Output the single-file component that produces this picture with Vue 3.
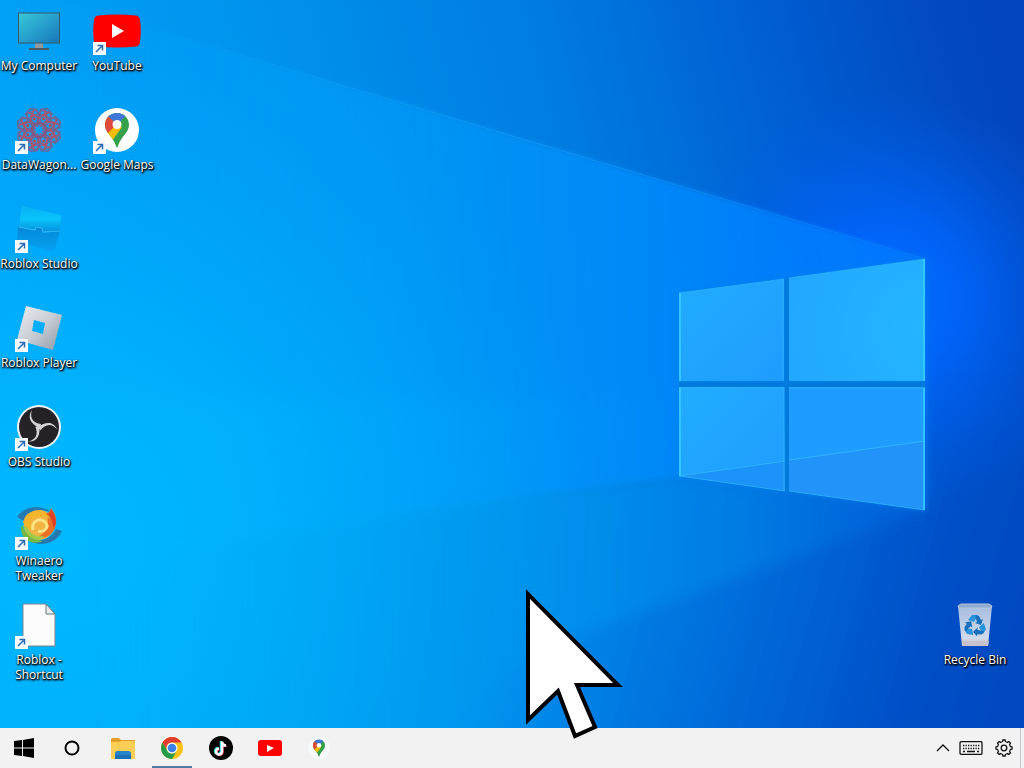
<script setup>
const shortcuts = [
  { id: 'computer', label: 'My Computer', col: 1, row: 1, linked: false },
  { id: 'datawagon', label: 'DataWagon...', col: 1, row: 2, linked: true },
  { id: 'studio', label: 'Roblox Studio', col: 1, row: 3, linked: true },
  { id: 'player', label: 'Roblox Player', col: 1, row: 4, linked: true },
  { id: 'obs', label: 'OBS Studio', col: 1, row: 5, linked: true },
  { id: 'winaero', label: 'Winaero Tweaker', col: 1, row: 6, linked: true },
  { id: 'page', label: 'Roblox - Shortcut', col: 1, row: 7, linked: true },
  { id: 'youtube', label: 'YouTube', col: 2, row: 1, linked: true },
  { id: 'maps', label: 'Google Maps', col: 2, row: 2, linked: true },
  { id: 'bin', label: 'Recycle Bin', col: 4, row: 7, linked: false }
]
const eighths = [0, 45, 90, 135, 180, 225, 270, 315]
const thirds = [0, 120, 240]
</script>

<template>
  <div class="screen">
    <main class="desktop">
      <svg class="wallpaper" viewBox="0 0 1024 728" preserveAspectRatio="none" aria-hidden="true">
        <defs>
          <linearGradient id="base" x1="0" y1="260" x2="1024" y2="0" gradientUnits="userSpaceOnUse">
            <stop offset="0" stop-color="#00a4f8" />
            <stop offset=".3" stop-color="#0092ec" />
            <stop offset=".55" stop-color="#007ce0" />
            <stop offset=".75" stop-color="#005fd3" />
            <stop offset=".92" stop-color="#0249bf" />
            <stop offset="1" stop-color="#0445bc" />
          </linearGradient>
          <linearGradient id="floor" x1="200" y1="500" x2="1024" y2="728" gradientUnits="userSpaceOnUse">
            <stop offset="0" stop-color="#00acf8" />
            <stop offset=".35" stop-color="#0094ec" />
            <stop offset=".6" stop-color="#0072de" />
            <stop offset=".85" stop-color="#0050c8" />
            <stop offset="1" stop-color="#0248bf" />
          </linearGradient>
          <linearGradient id="beam" x1="0" y1="0" x2="925" y2="0" gradientUnits="userSpaceOnUse">
            <stop offset="0" stop-color="#00a8fc" stop-opacity="0" />
            <stop offset=".4" stop-color="#009ff8" stop-opacity=".6" />
            <stop offset=".68" stop-color="#008dfd" stop-opacity=".85" />
            <stop offset="1" stop-color="#0078ff" stop-opacity=".8" />
          </linearGradient>
          <radialGradient id="cyan" cx="60" cy="540" r="540" gradientUnits="userSpaceOnUse">
            <stop offset="0" stop-color="#00b9ff" />
            <stop offset=".4" stop-color="#00b2ff" stop-opacity=".75" />
            <stop offset="1" stop-color="#00a4fa" stop-opacity="0" />
          </radialGradient>
          <radialGradient id="glow" cx="890" cy="300" r="210" gradientUnits="userSpaceOnUse">
            <stop offset="0" stop-color="#006cff" />
            <stop offset=".35" stop-color="#0066ff" stop-opacity=".85" />
            <stop offset="1" stop-color="#005ae8" stop-opacity="0" />
          </radialGradient>
          <linearGradient id="low" x1="100" y1="0" x2="925" y2="0" gradientUnits="userSpaceOnUse">
            <stop offset="0" stop-color="#00aef8" stop-opacity="0" />
            <stop offset=".6" stop-color="#0090ec" stop-opacity=".8" />
            <stop offset=".8" stop-color="#007ce4" stop-opacity=".8" />
            <stop offset="1" stop-color="#005ed8" stop-opacity=".7" />
          </linearGradient>
          <linearGradient id="pane" x1="0" y1="0" x2="1" y2="1">
            <stop offset="0" stop-color="#22acff" />
            <stop offset="1" stop-color="#1f9cff" />
          </linearGradient>
          <radialGradient id="shine" cx="925" cy="330" r="170" gradientUnits="userSpaceOnUse">
            <stop offset="0" stop-color="#24b6ff" />
            <stop offset="1" stop-color="#22a4ff" />
          </radialGradient>
          <linearGradient id="ray" x1="150" y1="0" x2="925" y2="0" gradientUnits="userSpaceOnUse">
            <stop offset="0" stop-color="#38b9ff" stop-opacity="0" />
            <stop offset=".5" stop-color="#28a9ff" stop-opacity=".4" />
            <stop offset="1" stop-color="#159aff" stop-opacity=".3" />
          </linearGradient>
          <filter id="soft" x="-20%" y="-20%" width="140%" height="140%"><feGaussianBlur stdDeviation="7" /></filter>
          <filter id="wide" x="-20%" y="-20%" width="140%" height="140%"><feGaussianBlur stdDeviation="12" /></filter>
          <filter id="fine"><feGaussianBlur stdDeviation="2" /></filter>
        </defs>
        <rect width="1024" height="728" fill="url(#base)" />
        <path d="M-50 400H1080V780H-50Z" fill="url(#floor)" filter="url(#wide)" />
        <rect width="1024" height="728" fill="url(#glow)" />
        <path d="M925 259 -10 -20V562L679 477 925 510Z" fill="url(#beam)" filter="url(#fine)" />
        <rect width="1024" height="728" fill="url(#cyan)" />
        <path d="M679 477 100 562V800H290L560 640 925 510Z" fill="url(#low)" filter="url(#soft)" />
        <path d="M679 293 925 259V510L679 477Z" fill="#0080ea" filter="url(#soft)" opacity=".6" />
        <path d="M150 28 925 259" stroke="url(#ray)" />
        <path d="M679 293 784 279V381H679Z" fill="url(#pane)" />
        <path d="M789 278 925 259V381H789Z" fill="url(#shine)" />
        <path d="M679 387H785V491L679 476Z" fill="url(#pane)" />
        <path d="M789 387H925V510L789 491Z" fill="#1f9cff" />
        <path d="M679 476 785 460V491Z" fill="#1c93f8" />
        <path d="M789 460 925 441V510L789 491Z" fill="#2293f8" />
        <path d="M679 476 785 461M789 460 925 441" fill="none" stroke="#2db5ff" />
        <path d="M783 280V381M784 388V490M679 293 784 279M789 278 925 259M679 388H785M789 388H925M680 476 785 491M789 491 924 510" fill="none" stroke="#2eb6fa" opacity=".7" />
        <path d="M680 381V293M680 388V476M924 510V388M924 381V259" fill="none" stroke="#35d0ff" stroke-width="2" opacity=".75" />
        <path d="M784 279 789 278V491L785 491ZM679 382H925V387H679Z" fill="#007bdc" />
      </svg>

      <div class="icons">
        <button
          v-for="s in shortcuts"
          :key="s.id"
          type="button"
          class="shortcut"
          :class="['col-' + s.col, 'row-' + s.row]"
        >
          <svg class="picture" viewBox="0 0 48 48" aria-hidden="true">
            <template v-if="s.id === 'computer'">
              <defs>
                <linearGradient id="lcd" x1="0" y1="0" x2="1" y2="1">
                  <stop offset="0" stop-color="#38c8d8" /><stop offset=".5" stop-color="#27a0cd" /><stop offset="1" stop-color="#1676b8" />
                </linearGradient>
              </defs>
              <path d="M20 36h8v5h-8z" fill="#8d9aa2" />
              <path d="M14 41h20v2H14z" fill="#4c5961" />
              <rect x="3.5" y="6" width="41" height="30" fill="url(#lcd)" stroke="#3a5968" />
            </template>
            <template v-else-if="s.id === 'youtube'">
              <path d="M5 8.500Q24 6.500 43 8.500Q46.500 9 47 13Q48.500 24 47 35Q46.500 39 43 39.500Q24 41.500 5 39.500Q1.500 39 1 35Q-.5 24 1 13Q1.500 9 5 8.500Z" fill="#f00" />
              <path d="M19 17v14l12-7z" fill="#fff" />
            </template>
            <template v-else-if="s.id === 'datawagon'">
              <g v-for="a in eighths" :key="a" :transform="'rotate(' + (a + 22) + ' 24 24)'" fill="none" stroke-width="1.500">
                <path d="M19 17 18 4 24 1 30 4 29 17Z" stroke="#66689a" />
                <path d="M24 20 16 11 20 4H28L32 11Z" stroke="#7d6492" />
                <path d="M18 14 24 8 30 14M21 4 27 9M27 4 21 9" stroke="#a8566f" />
                <circle cx="24" cy="12" r="1.500" fill="#b84a5e" stroke="none" />
              </g>
              <circle cx="24" cy="24" r="7" fill="none" stroke="#8a5478" stroke-width="2" />
            </template>
            <template v-else-if="s.id === 'maps'">
              <defs>
                <clipPath id="pin"><path d="M24 7C17 7 12 12 12 19c0 8 8 11 11 21q1 3 2 0c3-10 11-13 11-21C36 12 31 7 24 7Z" /></clipPath>
              </defs>
              <circle cx="24" cy="24" r="22" fill="#fff" />
              <g clip-path="url(#pin)">
                <path d="M8 4h32v40H8z" fill="#34a04c" />
                <path d="M8 40 12 28 24 17 29 21 19 35Z" fill="#fbbc04" />
                <path d="M14 9 24 18 13 29 6 26V8Z" fill="#e04a3a" />
                <path d="M14 9 24 18.500 34 9 30 2H14Z" fill="#3f76d8" />
              </g>
              <circle cx="24" cy="18.500" r="4.500" fill="#fff" />
            </template>
            <template v-else-if="s.id === 'studio'">
              <defs>
                <linearGradient id="st1" x1="0" y1="0" x2="0" y2="1"><stop offset="0" stop-color="#08b0f5" /><stop offset=".5" stop-color="#08c4fa" /><stop offset="1" stop-color="#0590dd" /></linearGradient>
                <linearGradient id="st2" x1="0" y1="0" x2="0" y2="1"><stop offset="0" stop-color="#0587d7" /><stop offset="1" stop-color="#06a4f4" /></linearGradient>
              </defs>
              <path d="M3 22 20 26 21 22 28 24 27 28 45 26 39 47 2 37Z" fill="url(#st2)" />
              <path d="M7 1 46 10 45 26 28 27 27 23 21 22 20 25 4 22Z" fill="url(#st1)" />
              <path d="M4 22 20 25 21 22 27 23 28 27 45 26" fill="none" stroke="#2fb8f2" />
            </template>
            <template v-else-if="s.id === 'player'">
              <defs>
                <linearGradient id="silver" x1="0" y1="0" x2="1" y2="1"><stop offset="0" stop-color="#eceff3" /><stop offset=".5" stop-color="#c9ced5" /><stop offset="1" stop-color="#8c98a6" /></linearGradient>
              </defs>
              <path fill-rule="evenodd" d="M11 2 47 11 38 46 2 36ZM19 16 17 27 28 30 30 19Z" fill="url(#silver)" />
            </template>
            <template v-else-if="s.id === 'obs'">
              <circle cx="24" cy="24" r="22" fill="#eef5f8" />
              <circle cx="24" cy="24" r="20" fill="#242226" />
              <path v-for="a in thirds" :key="a" :transform="'rotate(' + a + ' 24 24)'" d="M25 25C18 22 11 16 17 7C14 16 19 20 26 21Z" fill="#d4d4d6" />
            </template>
            <template v-else-if="s.id === 'winaero'">
              <path d="M2 15C8 5 24 1 36 10 24 6 13 10 9 19Z" fill="#2579ae" />
              <path d="M47 29C42 41 25 47 12 37 26 41 37 37 41 27Z" fill="#2579ae" />
              <circle cx="24" cy="23" r="15" fill="#f2b544" />
              <path d="M36 6Q44 16 40 26 35 38 22 35 30 32 32 25 34 16 31 11Q35 11 36 6Z" fill="#ec7026" />
              <path d="M36 7Q44 18 39 27 37 16 33 12Q36 11 36 7Z" fill="#dc4226" />
              <path d="M7 23Q12 37 28 39 15 44 8 34 5 28 7 23Z" fill="#79b840" />
              <path d="M8 20Q11 8 24 9 32 10 35 17 25 11 18 17 14 22 18 28 10 27 8 20Z" fill="#f4b52b" />
              <path d="M12 25Q17 36 29 34L25 38Q12 37 8 23Z" fill="#a4ca4b" />
              <path d="M18 28C16 19 25 15 30 20S29 31 23 29" fill="none" stroke="#fbe384" stroke-width="3" />
            </template>
            <template v-else-if="s.id === 'page'">
              <path d="M8 3H31L40 13V45H8Z" fill="#fcfcfc" stroke="#768790" />
              <path d="M31 3V13H40Z" fill="#e8edf0" stroke="#66767f" />
            </template>
            <template v-else>
              <defs>
                <linearGradient id="can" x1="0" y1="0" x2="0" y2="1"><stop offset="0" stop-color="#a5bde0" /><stop offset=".8" stop-color="#d1dae9" /><stop offset="1" stop-color="#bfb9c6" /></linearGradient>
              </defs>
              <path d="M7 5 41 5 37 45 11 45Z" fill="url(#can)" />
              <path d="M7 5 10 3H38L41 5 40 7H8Z" fill="#8ea9cd" stroke="#b5c8e0" />
              <path d="M11 40H38L37 45H11Z" fill="#c8c2cd" />
              <g v-for="a in thirds" :key="a" :transform="'rotate(' + a + ' 24 25)'">
                <path d="m17 19 4-5h6l-4 7z" fill="#2a93dd" />
                <path d="m24 14 4 1 2 4 2-1-2 6-6-2 2-1z" fill="#1670bd" />
              </g>
            </template>
            <g v-if="s.linked">
              <path d="M0 35h13v13H0z" fill="#f8fbff" />
              <path d="M3 45 9 39M4.500 38.500H9.500V43.500" fill="none" stroke="#286cb5" stroke-width="1.500" />
            </g>
          </svg>
          <span class="label">{{ s.label }}</span>
        </button>
      </div>
    </main>

    <footer class="taskbar">
      <nav class="system" aria-label="System">
        <button type="button" class="task" aria-label="Start">
          <svg width="20" height="20" viewBox="0 0 20 20"><path d="M0 3 8 2V9.500H0ZM9 2 20 0V9.500H9ZM0 10.500H8V18L0 17ZM9 10.500H20V20L9 18Z" /></svg>
        </button>
        <button type="button" class="task" aria-label="Search">
          <svg width="16" height="16" viewBox="0 0 16 16"><circle cx="8" cy="8" r="6.500" fill="none" stroke="#000" stroke-width="2" /></svg>
        </button>
      </nav>
      <nav class="apps" aria-label="Applications">
        <button type="button" class="task" aria-label="File Explorer">
          <svg width="24" height="24" viewBox="0 0 24 24">
            <path d="M0 3 1 2H8L10 4H24V9H0Z" fill="#dfa02c" />
            <path d="M0 6H8L10 5H24V23H0Z" fill="#fcce55" />
            <path d="M4 23V17L6 15H18L20 17V23Z" fill="#1a6fb5" />
            <path d="M4 17 6 15H18L20 17V19H4Z" fill="#2585c8" />
          </svg>
        </button>
        <button type="button" class="task active" aria-label="Chrome">
          <svg width="24" height="24" viewBox="0 0 24 24">
            <circle cx="12" cy="12" r="11" fill="#fbc116" />
            <path d="M2.500 6.500A11 11 0 0 1 21.500 6.500H12A5.500 5.500 0 0 0 7.200 14.700Z" fill="#e33b2e" />
            <path d="M2.500 6.500A11 11 0 0 0 12 23L16.800 14.800A5.500 5.500 0 0 1 7.200 14.800Z" fill="#249b4b" />
            <circle cx="12" cy="12" r="5.500" fill="#fff" /><circle cx="12" cy="12" r="4.300" fill="#3f7fea" />
          </svg>
        </button>
        <button type="button" class="task" aria-label="TikTok">
          <svg width="24" height="24" viewBox="0 0 24 24">
            <circle cx="12" cy="12" r="12" />
            <g fill="none" stroke-width="2.500">
              <path d="M12 5v10a3 3 0 1 1-3-3M12 5c0 3 2 4 4 4" stroke="#25d7df" />
              <path d="M13.500 6v10a3 3 0 1 1-3-3M13.500 6c0 3 2 4 4 4" stroke="#ee3158" />
              <path d="M13 5.500v10a3 3 0 1 1-3-3M13 5.500c0 3 2 4 4 4" stroke="#fff" />
            </g>
          </svg>
        </button>
        <button type="button" class="task" aria-label="YouTube">
          <svg width="24" height="24" viewBox="0 0 24 24"><rect y="4" width="24" height="16" rx="3" fill="#f00" /><path d="m9 9 7 3-7 4z" fill="#fff" /></svg>
        </button>
        <button type="button" class="task" aria-label="Google Maps">
          <svg width="24" height="24" viewBox="0 0 48 48">
            <circle cx="24" cy="24" r="22" fill="#f8f9fa" />
            <g clip-path="url(#pin)">
              <path d="M8 4h32v40H8z" fill="#34a04c" />
              <path d="M8 40 12 28 24 17 29 21 19 35Z" fill="#fbbc04" />
              <path d="M14 9 24 18 13 29 6 26V8Z" fill="#e04a3a" />
              <path d="M14 9 24 18.500 34 9 30 2H14Z" fill="#3f76d8" />
            </g>
            <circle cx="24" cy="18.500" r="4.500" fill="#fff" />
          </svg>
        </button>
      </nav>
      <div class="tray">
        <button type="button" class="tool" aria-label="Show hidden icons">
          <svg width="14" height="14" viewBox="0 0 14 14"><path d="m1 10 6-6 6 6" fill="none" stroke="#111" stroke-width="1.300" /></svg>
        </button>
        <button type="button" class="tool" aria-label="Touch keyboard">
          <svg width="24" height="14" viewBox="0 0 24 14">
            <rect x="1" y=".7" width="22" height="12.600" rx="1" fill="none" stroke="#111" stroke-width="1.300" />
            <path d="M4 4.500H21M4 7.500H21" stroke="#111" stroke-width="1.300" stroke-dasharray="1.300 1.200" />
            <path d="M4 10.500H6M8 10.500H16M18 10.500H20" stroke="#111" stroke-width="1.300" />
          </svg>
        </button>
        <button type="button" class="tool" aria-label="Settings">
          <svg width="18" height="18" viewBox="0 0 18 18" fill="none" stroke="#111" stroke-width="1.300">
            <path v-for="a in eighths" :key="a" :transform="'rotate(' + a + ' 9 9)'" d="M6.500 3 7.500 2.600 7.900 1H10.100L10.500 2.600 11.500 3" />
            <circle cx="9" cy="9" r="2.800" />
          </svg>
        </button>
        <button type="button" class="peek" aria-label="Show desktop"></button>
      </div>
    </footer>

    <svg class="cursor" width="100" height="152" viewBox="0 0 100 152" aria-hidden="true">
      <path d="M4 7V133L34 104 51 149 71 140 53 98H94Z" fill="#fff" stroke="#000" stroke-width="4" stroke-miterlimit="8" />
    </svg>
  </div>
</template>

<style>
body { margin: 0; }
</style>

<style scoped>
.screen {
  position: relative;
  display: flex;
  flex-direction: column;
  min-height: 100vh;
  overflow: hidden;
  font-family: "Open Sans", "Noto Sans", sans-serif;
}
button {
  margin: 0;
  padding: 0;
  border: 0;
  background: none;
  font: inherit;
  color: inherit;
}
.desktop {
  position: relative;
  flex: 1;
  background: #0090ee;
}
.wallpaper {
  position: absolute;
  inset: 0;
  width: 100%;
  height: 100%;
}
.icons {
  position: relative;
  display: grid;
  grid-template-columns: 78px 78px 1fr 78px;
  grid-template-rows: repeat(7, 99px);
  padding-right: 10px;
}
.shortcut {
  display: flex;
  flex-direction: column;
  align-items: center;
  gap: 3px;
  padding-top: 7px;
}
.col-1 { grid-column: 1; }
.col-2 { grid-column: 2; }
.col-4 { grid-column: 4; }
.row-1 { grid-row: 1; }
.row-2 { grid-row: 2; }
.row-3 { grid-row: 3; }
.row-4 { grid-row: 4; }
.row-5 { grid-row: 5; }
.row-6 { grid-row: 6; }
.row-7 { grid-row: 7; }
.picture {
  width: 48px;
  height: 48px;
  flex: none;
}
.label {
  max-width: 78px;
  color: #fff;
  font-size: 12px;
  line-height: 15px;
  text-align: center;
  text-shadow: 1px 1px 2px #000, 1px 1px 2px #000, 0 1px 2px #000;
}
.taskbar {
  display: flex;
  height: 40px;
  background: #f2f2f3;
}
.system {
  display: flex;
  gap: 8px;
  padding: 0 11px 0 4px;
}
.apps {
  display: flex;
  gap: 9px;
}
.task {
  display: flex;
  align-items: center;
  justify-content: center;
  width: 40px;
}
.active {
  box-shadow: inset 0 -2px #4f7ba6;
}
.tray {
  display: flex;
  align-items: center;
  gap: 9px;
  margin-left: auto;
}
.tool {
  display: flex;
}
.tool:nth-child(3) {
  margin-left: 3px;
}
.peek {
  align-self: stretch;
  width: 4px;
  margin-left: -2px;
  border-left: 1px solid #c5c9cd;
}
.cursor {
  position: absolute;
  left: 524px;
  top: 587px;
}
</style>
